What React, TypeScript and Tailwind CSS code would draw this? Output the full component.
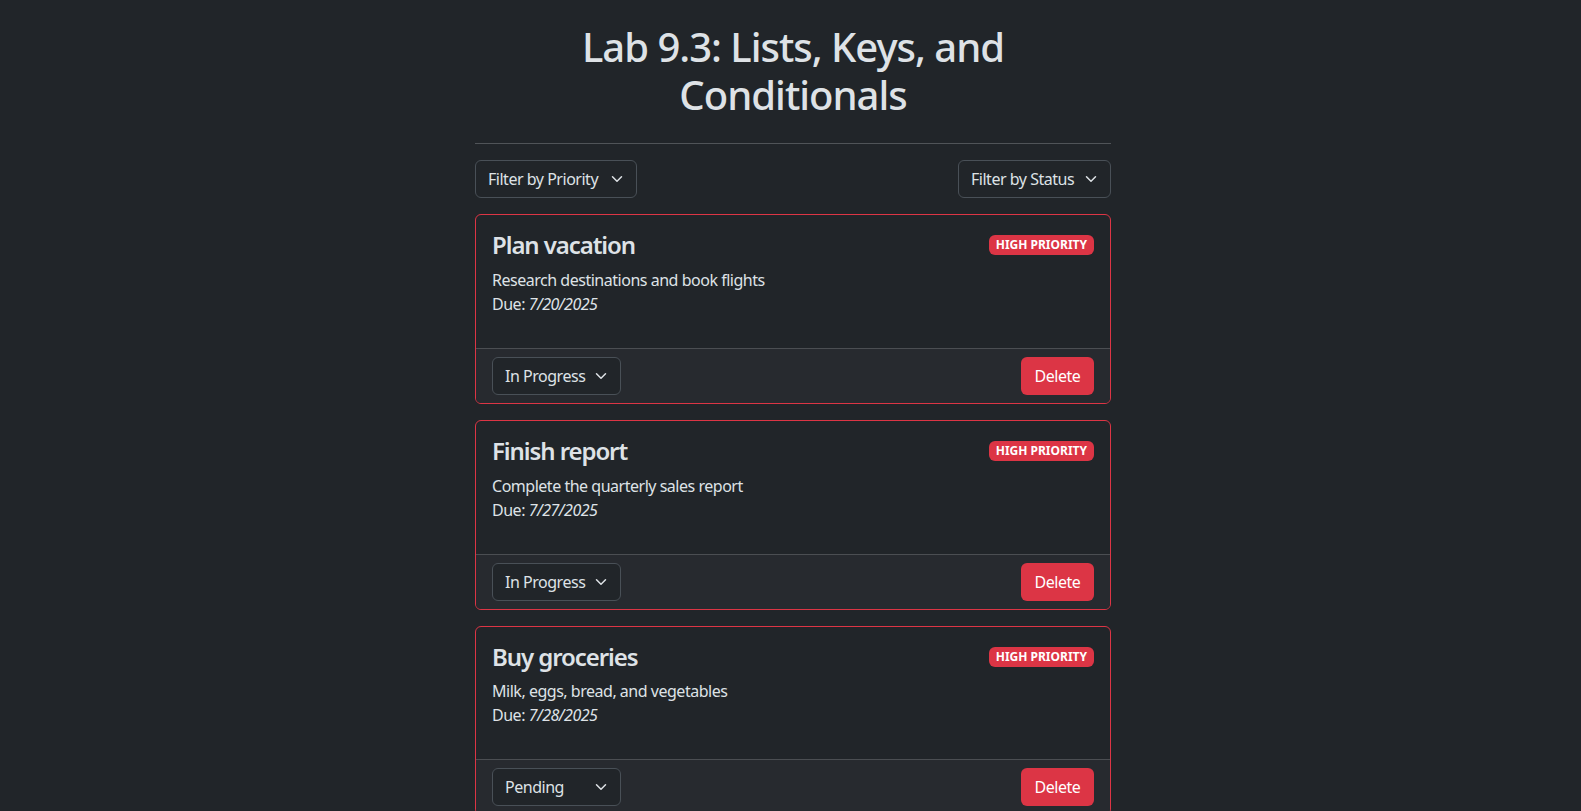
import { useState } from "react";

type Status = "Pending" | "In Progress" | "Completed";

interface Task {
  id: number;
  title: string;
  description: string;
  due: string;
  priority: "High" | "Medium" | "Low";
  status: Status;
}

const initialTasks: Task[] = [
  {
    id: 1,
    title: "Plan vacation",
    description: "Research destinations and book flights",
    due: "7/20/2025",
    priority: "High",
    status: "In Progress",
  },
  {
    id: 2,
    title: "Finish report",
    description: "Complete the quarterly sales report",
    due: "7/27/2025",
    priority: "High",
    status: "In Progress",
  },
  {
    id: 3,
    title: "Buy groceries",
    description: "Milk, eggs, bread, and vegetables",
    due: "7/28/2025",
    priority: "High",
    status: "Pending",
  },
];

function Chevron() {
  return (
    <svg
      viewBox="0 0 16 16"
      className="pointer-events-none absolute right-3 top-1/2 h-3 w-4 -translate-y-1/2"
      fill="none"
      stroke="#dee2e6"
      strokeWidth="2"
      strokeLinecap="round"
      strokeLinejoin="round"
    >
      <path d="m2 5 6 6 6-6" />
    </svg>
  );
}

function Select({
  value,
  options,
  width,
  onChange,
}: {
  value: string;
  options: string[];
  width: string;
  onChange?: (v: string) => void;
}) {
  return (
    <div className={`relative ${width}`}>
      <select
        value={value}
        onChange={(e) => onChange?.(e.target.value)}
        className="h-[38px] w-full appearance-none rounded-md border border-[#495057] bg-[#212529] pl-3 pr-8 text-base tracking-[-0.03em] text-[#dee2e6] outline-none"
      >
        {options.map((o) => (
          <option key={o} value={o}>
            {o}
          </option>
        ))}
      </select>
      <Chevron />
    </div>
  );
}

export default function App() {
  const [tasks, setTasks] = useState<Task[]>(initialTasks);
  const [priority, setPriority] = useState("Filter by Priority");
  const [status, setStatus] = useState("Filter by Status");

  const updateStatus = (id: number, s: string) =>
    setTasks((prev) => prev.map((t) => (t.id === id ? { ...t, status: s as Status } : t)));

  return (
    <div
      className="min-h-screen bg-[#212529] pl-[5px] tracking-[-0.03em] text-[#dee2e6]"
      style={{ fontFamily: '"Segoe UI", "Noto Sans", "Liberation Sans", sans-serif' }}
    >
      <div className="mx-auto w-[636px] pt-[23px]">
        {/* Header */}
        <h1 className="mb-6 text-center text-[40px] font-medium leading-[1.2] tracking-[-0.025em]">
          Lab 9.3: Lists, Keys, and Conditionals
        </h1>
        <hr className="my-4 border-t border-[#505458]" />

        {/* Filters */}
        <div className="mb-4 flex items-center justify-between">
          <Select
            value={priority}
            onChange={setPriority}
            width="w-[162px]"
            options={["Filter by Priority", "High", "Medium", "Low"]}
          />
          <Select
            value={status}
            onChange={setStatus}
            width="w-[153px]"
            options={["Filter by Status", "Pending", "In Progress", "Completed"]}
          />
        </div>

        {/* Task list */}
        {tasks.map((task) => (
          <div key={task.id} className="mb-4 rounded-md border border-[#dc3545] bg-[#212529]">
            <div className="p-4">
              <div className="mb-2 flex items-center justify-between">
                <h4 className="text-2xl font-semibold leading-[1.2] tracking-[-0.045em]">{task.title}</h4>
                {task.priority === "High" && (
                  <span className="rounded-md bg-[#dc3545] px-[7px] py-[4px] text-xs font-bold leading-none tracking-normal text-white">
                    HIGH PRIORITY
                  </span>
                )}
              </div>
              <p className="leading-6">{task.description}</p>
              <p className="mb-4 leading-6">
                Due: <em>{task.due}</em>
              </p>
            </div>
            <div className="flex items-center justify-between rounded-b-[5px] border-t border-[#4b4e52] bg-[#272a2f] px-4 py-2">
              <Select
                value={task.status}
                onChange={(v) => updateStatus(task.id, v)}
                width="w-[129px]"
                options={["Pending", "In Progress", "Completed"]}
              />
              <button
                onClick={() => setTasks((prev) => prev.filter((t) => t.id !== task.id))}
                className="h-[38px] w-[73px] rounded-md bg-[#dc3545] text-base text-white"
              >
                Delete
              </button>
            </div>
          </div>
        ))}
      </div>
    </div>
  );
}
